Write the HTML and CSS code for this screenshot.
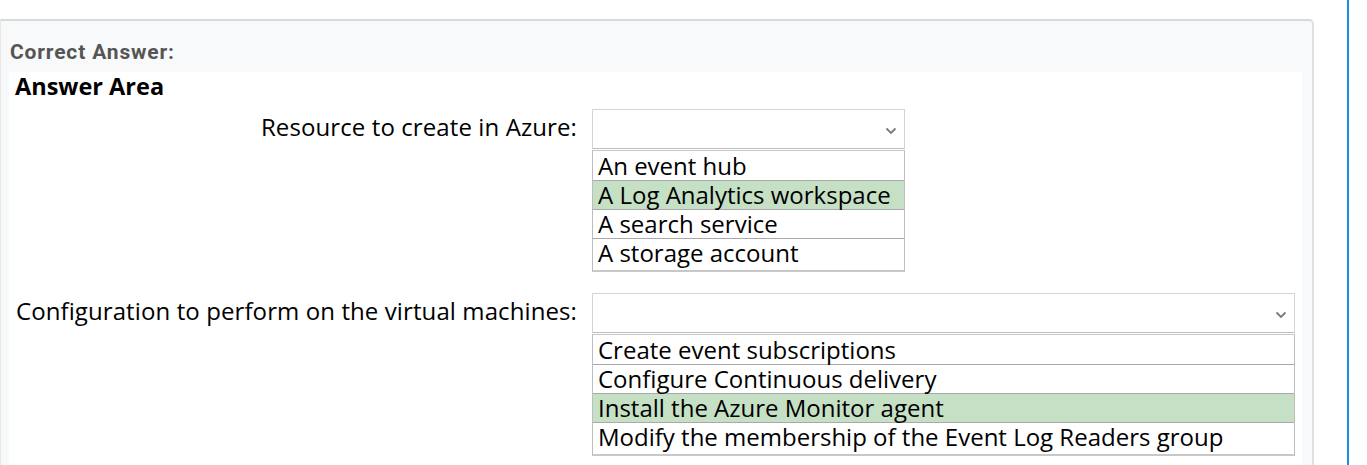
FILE: index.html
```html
<!DOCTYPE html>
<html>
<head>
<meta charset="utf-8">
<link rel="stylesheet" href="styles.css">
</head>
<body>
<div class="page">
  <div class="card-col">
    <div class="card">
      <div class="card-title">Correct Answer:</div>
      <div class="answer">
        <div class="answer-title">Answer Area</div>
        <div class="q-row">
          <div class="q-label">Resource to create in Azure:</div>
          <div class="dd dd-small">
            <div class="dd-head">
              <svg class="chev" width="12" height="8" viewBox="0 0 12 8"><path d="M1.5 1.5 L6 6 L10.5 1.5" fill="none" stroke="#7a7a7a" stroke-width="1.8"/></svg>
            </div>
            <div class="dd-list">
              <div class="dd-item first">An event hub</div>
              <div class="dd-item sel">A Log Analytics workspace</div>
              <div class="dd-item">A search service</div>
              <div class="dd-item last">A storage account</div>
            </div>
          </div>
        </div>
        <div class="q-row">
          <div class="q-label">Configuration to perform on the virtual machines:</div>
          <div class="dd dd-wide">
            <div class="dd-head">
              <svg class="chev" width="12" height="8" viewBox="0 0 12 8"><path d="M1.5 1.5 L6 6 L10.5 1.5" fill="none" stroke="#7a7a7a" stroke-width="1.8"/></svg>
            </div>
            <div class="dd-list">
              <div class="dd-item first">Create event subscriptions</div>
              <div class="dd-item">Configure Continuous delivery</div>
              <div class="dd-item sel">Install the Azure Monitor agent</div>
              <div class="dd-item last">Modify the membership of the Event Log Readers group</div>
            </div>
          </div>
        </div>
      </div>
    </div>
  </div>
  <div class="blue-line"></div>
</div>
</body>
</html>
```

FILE: styles.css
```css
html, body {
  margin: 0;
  padding: 0;
  background: #ffffff;
  overflow: hidden;
}
.page {
  display: flex;
  height: 465px;
  overflow: hidden;
}
.card-col {
  width: 1314px;
  padding-top: 19px;
  box-sizing: border-box;
}
.card {
  height: 470px;
  box-sizing: border-box;
  background: #f8f9fa;
  border-top: 2px solid #d9d9d9;
  border-right: 2px solid #e0e0e0;
  border-left: 1px solid #e6e6e6;
  border-top-right-radius: 5px;
  padding: 19px 10px 0 8px;
}
.card-title {
  font-family: "Liberation Sans Narrow", "Roboto", sans-serif;
  font-weight: bold;
  font-size: 21px;
  letter-spacing: 0.85px;
  line-height: 24px;
  color: #555555;
  height: 32px;
  padding-left: 1px;
}
.answer {
  background: #ffffff;
  height: 420px;
  padding: 0 0 0 6px;
  font-family: "Open Sans", "Noto Sans", sans-serif;
  color: #000;
}
.answer-title {
  font-weight: bold;
  font-size: 23.5px;
  line-height: 28px;
  height: 37px;
}
.q-row {
  display: flex;
  align-items: flex-start;
  margin-bottom: 21px;
}
.q-label {
  width: 562px;
  text-align: right;
  font-size: 24px;
  letter-spacing: 0.1px;
  height: 40px;
  line-height: 36px;
  padding-right: 15px;
  white-space: nowrap;
}
.dd {
  box-sizing: border-box;
}
.dd-small { width: 313px; }
.dd-wide { width: 703px; }
.dd-head {
  height: 40px;
  box-sizing: border-box;
  border: 1px solid #d4d4d4;
  border-bottom: 1px solid #bdbdbd;
  display: flex;
  align-items: center;
  justify-content: flex-end;
  padding-right: 7px;
}
.chev { display: block; margin-top: 3px; }
.dd-list {
  border: 1px solid #bdbdbd;
  border-top: 1px solid #c8c8c8;
  margin-top: 1px;
  border-bottom: 2px solid #c8c8c8;
}
.dd-item {
  font-size: 24px;
  line-height: 28px;
  height: 28px;
  padding-left: 5px;
  border-bottom: 1px solid #a9a9a9;
  white-space: nowrap;
}
.dd-item.first {
  height: 29px;
  line-height: 29px;
}
.dd-item.last {
  border-bottom: none;
  height: 31px;
}
.dd-item.sel {
  background: #c5e0c4;
}
.blue-line {
  width: 2px;
  margin-left: 33px;
  background: #1a8fe3;
  height: 465px;
}
```
